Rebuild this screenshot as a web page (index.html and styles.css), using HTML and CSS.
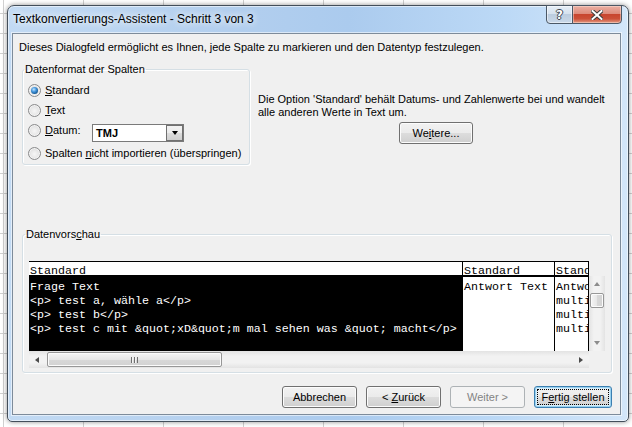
FILE: index.html
```html
<!DOCTYPE html>
<html lang="de">
<head>
<meta charset="utf-8">
<title>Textkonvertierungs-Assistent - Schritt 3 von 3</title>
<link rel="stylesheet" href="styles.css">
</head>
<body>
<div class="window">
  <div class="titlebar">
    <span class="title">Textkonvertierungs-Assistent - Schritt 3 von 3</span>
    <div class="caption-buttons">
      <span class="cbtn help"><span class="help-glyph">?</span></span>
      <span class="cbtn close">
        <svg width="12" height="10" viewBox="0 0 12 10"><path d="M1.5 1 L10.5 9 M10.5 1 L1.5 9" stroke="#3b3b3b" stroke-width="4" stroke-linecap="square"/><path d="M1.5 1 L10.5 9 M10.5 1 L1.5 9" stroke="#ffffff" stroke-width="2" stroke-linecap="square"/></svg>
      </span>
    </div>
  </div>
  <div class="client">
    <p class="intro">Dieses Dialogfeld ermöglicht es Ihnen, jede Spalte zu markieren und den Datentyp festzulegen.</p>
    <div class="top-row">
      <fieldset class="group format">
        <legend>Datenformat der Spalten</legend>
        <div class="opt opt-1"><span class="radio checked"></span><span class="lbl"><u>S</u>tandard</span></div>
        <div class="opt opt-2"><span class="radio"></span><span class="lbl"><u>T</u>ext</span></div>
        <div class="opt opt-3"><span class="radio"></span><span class="lbl lbl-datum"><u>D</u>atum:</span>
          <span class="combo"><span class="combo-text">TMJ</span><span class="combo-btn"><span class="tri-down"></span></span></span>
        </div>
        <div class="opt opt-4"><span class="radio"></span><span class="lbl">Spalten <u>n</u>icht importieren (überspringen)</span></div>
      </fieldset>
      <div class="info">
        <p class="info-text">Die Option 'Standard' behält Datums- und Zahlenwerte bei und wandelt<br>alle anderen Werte in Text um.</p>
        <button class="btn weitere">We<u>i</u>tere...</button>
      </div>
    </div>
    <fieldset class="group preview-group">
      <legend>Datenvors<u>c</u>hau</legend>
      <div class="preview">
        <div class="table">
          <div class="col col-1">
            <div class="head">Standard</div>
            <div class="body">Frage Text<br>&lt;p&gt; test a, wähle a&lt;/p&gt;<br>&lt;p&gt; test b&lt;/p&gt;<br>&lt;p&gt; test c mit &amp;quot;xD&amp;quot;m mal sehen was &amp;quot; macht&lt;/p&gt;</div>
          </div>
          <div class="col col-2">
            <div class="head">Standard</div>
            <div class="body">Antwort Text</div>
          </div>
          <div class="col col-3">
            <div class="head">Standard</div>
            <div class="body">Antwort<br>multi<br>multi<br>multi</div>
          </div>
        </div>
        <div class="vcell">
          <div class="vscroll">
            <span class="sb-btn"><span class="arr arr-up"></span></span>
            <span class="vthumb"></span>
            <span class="sb-fill"></span>
            <span class="sb-btn"><span class="arr arr-down"></span></span>
          </div>
        </div>
        <div class="hscroll">
          <span class="sb-btn"><span class="arr arr-left"></span></span>
          <span class="hthumb"><span class="grip"></span></span>
          <span class="sb-fill"></span>
          <span class="sb-btn"><span class="arr arr-right"></span></span>
        </div>
        <div class="corner"></div>
      </div>
    </fieldset>
    <div class="buttons">
      <button class="btn">Abbrechen</button>
      <button class="btn">&lt; <u>Z</u>urück</button>
      <button class="btn disabled">Weiter &gt;</button>
      <button class="btn default"><span class="focus">F<u>e</u>rtig stellen</span></button>
    </div>
  </div>
</div>
</body>
</html>
```

FILE: styles.css
```css
* { box-sizing: border-box; }
html, body { margin: 0; padding: 0; }
body {
  width: 632px;
  height: 427px;
  overflow: hidden;
  background-color: #ffffff;
  background-image:
    linear-gradient(to right, #d0d0d0 1px, transparent 1px),
    linear-gradient(to bottom, #d0d0d0 1px, transparent 1px);
  background-size: 80px 20px;
  background-position: 3px 13px;
  font-family: "Segoe UI", "Liberation Sans", Arial, sans-serif;
  font-size: 11px;
  color: #000;
}
p { margin: 0; }
u { text-decoration: underline; text-underline-offset: 1px; }

.window {
  margin: 5px 0 0 7px;
  width: 622px;
  height: 417px;
  border: 1px solid #434e5a;
  border-radius: 7px 7px 5px 5px;
  background: linear-gradient(to right, #c2daf3 0%, #b3cfee 35%, #abcbee 55%, #bcd9f6 80%, #d3e6f9 100%);
  box-shadow: 0 0 5px rgba(0, 0, 0, .45), inset 0 0 0 1px rgba(255, 255, 255, .55);
  display: flex;
  flex-direction: column;
  padding: 0 7px 6px 4px;
}

.titlebar {
  height: 27px;
  margin: 0 -7px 0 -4px;
  padding-left: 5px;
  display: flex;
  justify-content: space-between;
  align-items: flex-start;
}
.title {
  margin-top: 6px;
  font-size: 12px;
  line-height: 14px;
  text-shadow: 0 0 6px #ffffff, 0 0 10px rgba(255, 255, 255, .8);
}
.caption-buttons {
  display: flex;
  margin-top: -1px;
  margin-right: 6px;
}
.cbtn {
  height: 19px;
  border: 1px solid #4b5866;
  display: flex;
  align-items: center;
  justify-content: center;
}
.help {
  width: 27px;
  border-radius: 0 0 0 4px;
  background: linear-gradient(#e6eef7 0%, #d6e2ee 45%, #bccddf 50%, #c9d8e8 100%);
  box-shadow: inset 0 0 0 1px rgba(255, 255, 255, .5);
}
.help-glyph {
  font-family: "DejaVu Sans", sans-serif;
  font-weight: bold;
  font-size: 12px;
  line-height: 12px;
  color: #ffffff;
  text-shadow: 1px 0 0 #3c4650, -1px 0 0 #3c4650, 0 1px 0 #3c4650, 0 -1px 0 #3c4650;
}
.close {
  width: 50px;
  margin-left: -1px;
  border-radius: 0 0 4px 0;
  background: linear-gradient(#eab0a4 0%, #de8c7c 45%, #c8462f 50%, #cc5038 75%, #e39a82 100%);
  box-shadow: inset 0 0 0 1px rgba(255, 230, 220, .45);
}
.close svg { display: block; }

.client {
  flex: 1;
  background: #f0f0f0;
  border: 1px solid #7d8b9a;
  box-shadow: 0 0 0 1px rgba(255, 255, 255, .55);
  padding: 6px 8px 0 9px;
  display: flex;
  flex-direction: column;
}
.intro {
  margin-left: -3px;
  line-height: 14px;
  white-space: nowrap;
}

.group {
  margin: 0;
  border: 1px solid #d5dfe5;
  border-radius: 3px;
  box-shadow: inset 1px 1px 0 #ffffff, 1px 1px 0 #ffffff;
  min-width: 0;
}
.group legend {
  padding: 0 1px;
  margin-left: -4px;
  line-height: 14px;
}

.top-row {
  display: flex;
  margin-top: 8px;
  align-items: flex-start;
}
.format {
  flex: none;
  width: 228px;
  padding: 7px 4px 4px 5px;
}
.opt {
  display: flex;
  align-items: flex-start;
  line-height: 14px;
}
.opt-2, .opt-3 { margin-top: 6px; }
.opt-4 { margin-top: 4px; }
.radio {
  position: relative;
  flex: none;
  width: 13px;
  height: 13px;
  margin-top: 1px;
  border-radius: 50%;
  border: 1px solid #8a8b8c;
  background: radial-gradient(circle at 50% 55%, #f6f6f6 0%, #eaeaea 40%, #cfcfcf 100%);
  box-shadow: inset 0 0 0 1px #f4f4f4;
}
.radio.checked::after {
  content: "";
  position: absolute;
  left: 2px;
  top: 2px;
  width: 7px;
  height: 7px;
  border-radius: 50%;
  background: radial-gradient(circle at 40% 35%, #c3e6ff 0%, #4b9be0 35%, #185f9c 70%, #0f4474 100%);
}
.lbl { margin-left: 4px; white-space: nowrap; }
.lbl-datum { width: 47px; }
.combo {
  margin-top: 1px;
  width: 92px;
  height: 18px;
  border: 1px solid #7a7a7a;
  background: #ffffff;
  display: flex;
  justify-content: space-between;
}
.combo-text {
  padding-left: 3px;
  line-height: 14px;
  margin-top: 1px;
  font-weight: bold;
}
.combo-btn {
  width: 17px;
  height: 16px;
  border: 1px solid #707070;
  background: linear-gradient(#f2f2f2 0%, #ebebeb 50%, #dddddd 50%, #cfcfcf 100%);
  display: flex;
  align-items: center;
  justify-content: center;
}
.tri-down {
  width: 0;
  height: 0;
  border-left: 3.5px solid transparent;
  border-right: 3.5px solid transparent;
  border-top: 4px solid #000;
}

.info {
  margin-left: 8px;
  padding-top: 31px;
}
.info-text {
  line-height: 13px;
  white-space: nowrap;
}

.btn {
  font-family: inherit;
  font-size: 11px;
  color: #000;
  height: 22px;
  width: 75px;
  padding: 0;
  border: 1px solid #707070;
  border-radius: 3px;
  background: linear-gradient(#f2f2f2 0%, #ebebeb 50%, #dddddd 50%, #cfcfcf 100%);
  box-shadow: inset 0 0 0 1px #fcfcfc;
  line-height: 14px;
  white-space: nowrap;
}
.weitere {
  display: block;
  margin-top: 3px;
  margin-left: 141px;
  width: 74px;
}
.btn.disabled {
  color: #838383;
  border-color: #adb2b5;
  background: #f4f4f4;
  box-shadow: none;
}
.btn.default {
  width: 78px;
  border-color: #3c7fb1;
  box-shadow: inset 0 0 0 1px #98d1ef, inset 0 0 0 2px #d8eefb;
  padding: 0 2px;
}
.focus {
  display: block;
  height: 16px;
  border: 1px dotted #000;
  line-height: 14px;
}

.preview-group {
  margin-top: 62px;
  padding: 20px 5px 4px 6px;
}

.preview {
  display: grid;
  grid-template-columns: 560px 16px;
  grid-template-rows: 90px 17px;
}
.table {
  display: flex;
  border-right: 1px solid #000;
  font-family: "Courier New", "Liberation Mono", monospace;
  font-size: 11.67px;
  white-space: nowrap;
  overflow: hidden;
}
.col {
  display: flex;
  flex-direction: column;
  flex: none;
  overflow: hidden;
  border-right: 1px solid #000;
}
.col-1 { width: 434px; }
.col-2 { width: 92px; }
.col-3 { width: 33px; border-right: none; }
.head {
  flex: none;
  height: 16px;
  border-top: 1px solid #000;
  border-bottom: 2px solid #000;
  background: #fff;
  line-height: 19px;
  padding-left: 1px;
  overflow: hidden;
}
.body {
  flex: 1;
  background: #fff;
  line-height: 14px;
  padding: 3px 0 0 1px;
}
.col-1 .body { background: #000; color: #fff; }

.vcell {
  padding-top: 15px;
}
.vscroll {
  height: 75px;
  display: flex;
  flex-direction: column;
  background: linear-gradient(to right, #e3e3e3, #f2f2f2 30%, #f2f2f2 70%, #e3e3e3);
}
.sb-btn {
  flex: none;
  width: 16px;
  height: 16px;
  display: flex;
  align-items: center;
  justify-content: center;
}
.sb-fill { flex: 1; }
.vthumb {
  flex: none;
  margin: 1px 1px 0 1px;
  height: 15px;
  border: 1px solid #979797;
  border-radius: 2px;
  background: linear-gradient(to right, #f5f5f5, #e6e6e6 50%, #d8d8d8 51%, #d2d2d2);
  box-shadow: inset 0 0 0 1px #fbfbfb;
}
.arr { width: 0; height: 0; }
.arr-up { border-left: 3.5px solid transparent; border-right: 3.5px solid transparent; border-bottom: 4px solid #8c8c8c; }
.arr-down { border-left: 3.5px solid transparent; border-right: 3.5px solid transparent; border-top: 4px solid #8c8c8c; }
.arr-left { border-top: 3.5px solid transparent; border-bottom: 3.5px solid transparent; border-right: 4px solid #4a4a4a; }
.arr-right { border-top: 3.5px solid transparent; border-bottom: 3.5px solid transparent; border-left: 4px solid #4a4a4a; }

.hscroll {
  display: flex;
  align-items: center;
  background: linear-gradient(#e3e3e3, #f2f2f2 30%, #f2f2f2 70%, #e3e3e3);
  height: 17px;
}
.hscroll .sb-btn { height: 17px; }
.hthumb {
  flex: none;
  margin-left: 2px;
  width: 175px;
  height: 15px;
  border: 1px solid #979797;
  border-radius: 2px;
  background: linear-gradient(#f5f5f5, #e6e6e6 50%, #d8d8d8 51%, #d2d2d2);
  box-shadow: inset 0 0 0 1px #fbfbfb;
  display: flex;
  align-items: center;
  justify-content: center;
}
.grip {
  width: 7px;
  height: 6px;
  background: repeating-linear-gradient(to right, #6e6e6e 0 1px, #f4f4f4 1px 2px, transparent 2px 3px);
}
.corner { background: #f0f0f0; }

.buttons {
  display: flex;
  justify-content: flex-end;
  gap: 9px;
  margin-top: 13px;
}
```
